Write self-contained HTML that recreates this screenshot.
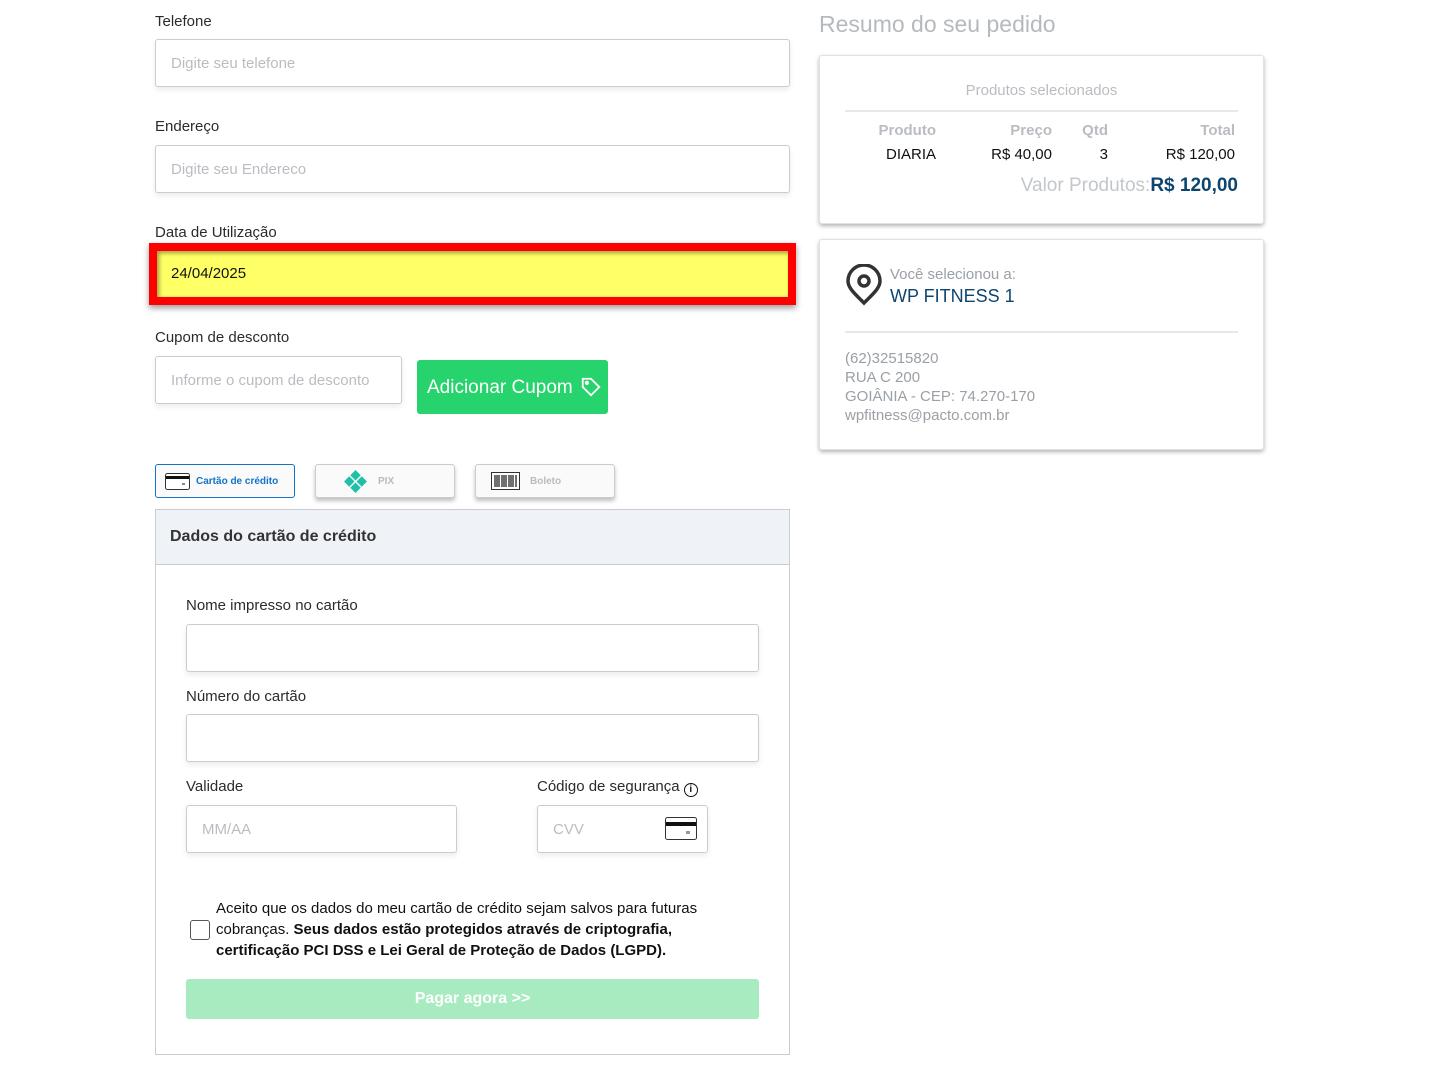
<!DOCTYPE html>
<html><head><meta charset="utf-8"><style>
*{box-sizing:border-box;margin:0;padding:0}
body{width:1446px;height:1078px;background:#fff;font-family:"Liberation Sans",sans-serif;position:relative;overflow:hidden;color:#222}
.a{position:absolute}
.lbl{font-size:15px;color:#2b2b2b}
.inp{position:absolute;background:#fff;border:1px solid #c9cdd2;border-radius:3px;box-shadow:0 3px 6px rgba(0,0,0,.08);font-size:15px;color:#b9bdc2;padding-left:15px;display:flex;align-items:center}
.tab{position:absolute;top:464px;height:34px;width:140px;border:1px solid #ccc;border-radius:3px;background:#fafafa;box-shadow:0 3px 4px rgba(0,0,0,.25);font-size:10px;font-weight:bold;color:#bbb;display:flex;align-items:center}
.card{position:absolute;background:#fff;border:1px solid #e2e2e2;border-radius:3px;box-shadow:0 2px 4px rgba(0,0,0,.3)}
.g{color:#9aa0a6}
</style></head><body>
<div class="a lbl" style="left:155px;top:13px">Telefone</div>
<div class="inp" style="left:155px;top:39px;width:635px;height:48px">Digite seu telefone</div>
<div class="a lbl" style="left:155px;top:118px">Endereço</div>
<div class="inp" style="left:155px;top:145px;width:635px;height:48px">Digite seu Endereco</div>
<div class="a lbl" style="left:155px;top:224px">Data de Utilização</div>
<div class="a" style="left:149px;top:243px;width:647px;height:62px;background:#ff0000;box-shadow:0 3px 6px rgba(0,0,0,.4)"></div>
<div class="a" style="left:157px;top:251px;width:631px;height:46px;background:#ffff66;box-shadow:inset 2px 2px 4px rgba(0,0,0,.4);font-size:15px;color:#111;padding-left:14px;line-height:46px">24/04/2025</div>
<div class="a lbl" style="left:155px;top:329px">Cupom de desconto</div>
<div class="inp" style="left:155px;top:356px;width:247px;height:48px">Informe o cupom de desconto</div>
<div class="a" style="left:417px;top:360px;width:191px;height:54px;background:#26d36c;border-radius:3px;color:#fff;font-size:19px;line-height:56px;padding-left:10px">Adicionar Cupom
<svg class="a" style="left:163px;top:16px" width="22" height="22" viewBox="0 0 24 24" fill="none" stroke="#fff" stroke-width="2"><path d="M3 3h9l9 9-9 9-9-9z"/><circle cx="7.5" cy="7.5" r="1.3"/></svg></div>

<div class="tab" style="left:155px;border:1px solid #1273c9;box-shadow:none;color:#1273c9;background:#fafafa"><svg style="margin:0 6px 0 9px" width="25" height="17" viewBox="0 0 25 17"><rect x=".5" y=".5" width="24" height="16" rx="2" fill="#fff" stroke="#333"/><rect x="1" y="3" width="23" height="3" fill="#111"/><rect x="17" y="10" width="3" height="2" fill="#888"/></svg>Cartão de crédito</div>
<div class="tab" style="left:315px"><svg style="margin:0 10px 0 27px" width="25" height="25" viewBox="0 0 24 24" fill="#1fc0a5"><path d="M12 1l5 5-5 5-5-5zM12 13l5 5-5 5-5-5zM1 12l5-5 5 5-5 5zM13 12l5-5 5 5-5 5z"/></svg>PIX</div>
<div class="tab" style="left:475px"><svg style="margin:0 10px 0 15px" width="29" height="18" viewBox="0 0 29 18"><rect x=".5" y=".5" width="28" height="17" fill="#fff" stroke="#333"/><path d="M4 3v12M6 3v12M8 3v12M11 3v12M13 3v12M15 3v12M18 3v12M20 3v12M22 3v12M25 3v12" stroke="#111" stroke-width="1.2"/></svg>Boleto</div>

<div class="a" style="left:155px;top:509px;width:635px;height:546px;border:1px solid #c9cdd2"></div>
<div class="a" style="left:156px;top:510px;width:633px;height:55px;background:#eff2f6;border-bottom:1px solid #c9cdd2;font-size:16px;font-weight:bold;color:#333;padding:18px 0 0 14px">Dados do cartão de crédito</div>
<div class="a lbl" style="left:186px;top:597px">Nome impresso no cartão</div>
<div class="inp" style="left:186px;top:624px;width:573px;height:48px"></div>
<div class="a lbl" style="left:186px;top:688px">Número do cartão</div>
<div class="inp" style="left:186px;top:714px;width:573px;height:48px"></div>
<div class="a lbl" style="left:186px;top:778px">Validade</div>
<div class="inp" style="left:186px;top:805px;width:271px;height:48px">MM/AA</div>
<div class="a lbl" style="left:537px;top:778px">Código de segurança <span style="display:inline-block;width:14px;height:14px;border:1.5px solid #111;border-radius:50%;font-size:10px;text-align:center;line-height:11px;font-weight:bold;color:#111;vertical-align:-1px">i</span></div>
<div class="inp" style="left:537px;top:805px;width:171px;height:48px">CVV<svg class="a" style="left:127px;top:11px" width="32" height="23" viewBox="0 0 32 23"><rect x=".5" y=".5" width="31" height="22" rx="2" fill="#fff" stroke="#333"/><rect x="1" y="5" width="30" height="4" fill="#111"/><rect x="21" y="14" width="4" height="3" fill="#999"/></svg></div>
<div class="a" style="left:190px;top:920px;width:20px;height:20px;border:1px solid #555;border-radius:3px"></div>
<div class="a" style="left:216px;top:898px;width:540px;font-size:15px;line-height:21px;color:#111">Aceito que os dados do meu cartão de crédito sejam salvos para futuras cobranças. <b>Seus dados estão protegidos através de criptografia, certificação PCI DSS e Lei Geral de Proteção de Dados (LGPD).</b></div>
<div class="a" style="left:186px;top:979px;width:573px;height:40px;background:#a8ebc1;border-radius:3px;color:#fff;font-weight:bold;font-size:16px;text-align:center;line-height:40px">Pagar agora &gt;&gt;</div>

<div class="a" style="left:819px;top:11px;font-size:23px;color:#b5babf">Resumo do seu pedido</div>
<div class="card" style="left:819px;top:55px;width:445px;height:169px">
<div class="a g" style="left:0;width:443px;top:26px;text-align:center;font-size:15px;color:#b9bdc2">Produtos selecionados</div>
<div class="a" style="left:25px;top:54px;width:393px;height:2px;background:#e6e8eb"></div>
<div class="a" style="top:66px;right:327px;font-size:15px;font-weight:bold;color:#b9bdc2">Produto</div>
<div class="a" style="top:66px;right:211px;font-size:15px;font-weight:bold;color:#b9bdc2">Preço</div>
<div class="a" style="top:66px;right:155px;font-size:15px;font-weight:bold;color:#b9bdc2">Qtd</div>
<div class="a" style="top:66px;right:28px;font-size:15px;font-weight:bold;color:#b9bdc2">Total</div>
<div class="a" style="top:90px;right:327px;font-size:15px;color:#111">DIARIA</div>
<div class="a" style="top:90px;right:211px;font-size:15px;color:#111">R$ 40,00</div>
<div class="a" style="top:90px;right:155px;font-size:15px;color:#111">3</div>
<div class="a" style="top:90px;right:28px;font-size:15px;color:#111">R$ 120,00</div>
<div class="a" style="top:119px;right:25px;font-size:19px;color:#c3c7cb">Valor Produtos:<b style="color:#0e456f">R$ 120,00</b></div>
</div>
<div class="card" style="left:819px;top:239px;width:445px;height:211px">
<svg class="a" style="left:25px;top:24px" width="38" height="42" viewBox="0 0 38 42" fill="none" stroke="#333" stroke-width="3.5"><path d="M19 39C10 30 3 24 3 17a16 16 0 0 1 32 0c0 7-7 13-16 22z"/><circle cx="19" cy="17" r="5"/></svg>
<div class="a" style="left:70px;top:26px;font-size:15px;color:#9aa0a6">Você selecionou a:</div>
<div class="a" style="left:70px;top:46px;font-size:18px;color:#0e456f">WP FITNESS 1</div>
<div class="a" style="left:25px;top:91px;width:393px;height:2px;background:#e6e8eb"></div>
<div class="a" style="left:25px;top:109px;font-size:15px;line-height:19px;color:#9aa0a6">(62)32515820<br>RUA C 200<br>GOIÂNIA - CEP: 74.270-170<br>wpfitness@pacto.com.br</div>
</div>
</body></html>
